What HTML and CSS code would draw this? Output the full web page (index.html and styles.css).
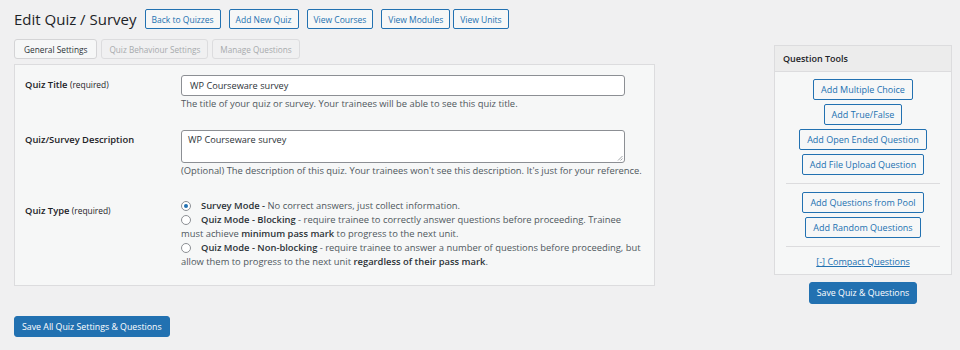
FILE: index.html
```html
<!DOCTYPE html>
<html>
<head>
<meta charset="utf-8">
<link rel="stylesheet" href="styles.css">
</head>
<body>
<div class="page">
  <div class="main">
    <div class="head">
      <h1 class="title">Edit Quiz / Survey</h1>
      <a class="btn" href="#">Back to Quizzes</a>
      <a class="btn" href="#">Add New Quiz</a>
      <a class="btn" href="#">View Courses</a>
      <a class="btn" href="#">View Modules</a>
      <a class="btn btn-tight" href="#">View Units</a>
    </div>
    <div class="tabs">
      <span class="tab tab-active">General Settings</span>
      <span class="tab">Quiz Behaviour Settings</span>
      <span class="tab">Manage Questions</span>
    </div>
    <div class="panel">
      <div class="row row-title">
        <div class="label"><b>Quiz Title</b> <span class="req">(required)</span></div>
        <div class="field">
          <div class="input">WP Courseware survey</div>
          <div class="desc">The title of your quiz or survey. Your trainees will be able to see this quiz title.</div>
        </div>
      </div>
      <div class="row row-desc">
        <div class="label"><b>Quiz/Survey Description</b></div>
        <div class="field">
          <div class="textarea">WP Courseware survey
            <svg class="grip" width="6" height="6" viewBox="0 0 6 6"><path d="M5.5 1 L1 5.5 M5.5 3.5 L3.5 5.5" stroke="#8c8f94" stroke-width="0.8" fill="none"/></svg>
          </div>
          <div class="desc">(Optional) The description of this quiz. Your trainees won't see this description. It's just for your reference.</div>
        </div>
      </div>
      <div class="row row-type">
        <div class="label label-type"><b>Quiz Type</b> <span class="req">(required)</span></div>
        <div class="field radios">
          <div class="opt"><span class="radio checked"></span><b>Survey Mode -</b> No correct answers, just collect information.</div>
          <div class="opt"><span class="radio"></span><b>Quiz Mode - Blocking</b> - require trainee to correctly answer questions before proceeding. Trainee must achieve <b>minimum pass mark</b> to progress to the next unit.</div>
          <div class="opt"><span class="radio"></span><b>Quiz Mode - Non-blocking</b> - require trainee to answer a number of questions before proceeding, but allow them to progress to the next unit <b>regardless of their pass mark</b>.</div>
        </div>
      </div>
    </div>
    <div class="save-row">
      <a class="btn-primary" href="#">Save All Quiz Settings &amp; Questions</a>
    </div>
  </div>
  <div class="side">
    <div class="box">
      <div class="box-head">Question Tools</div>
      <div class="box-body">
        <div class="tools">
          <a class="tbtn" href="#">Add Multiple Choice</a>
          <a class="tbtn" href="#">Add True/False</a>
          <a class="tbtn" href="#">Add Open Ended Question</a>
          <a class="tbtn" href="#">Add File Upload Question</a>
        </div>
        <div class="sep"></div>
        <div class="tools">
          <a class="tbtn" href="#">Add Questions from Pool</a>
          <a class="tbtn" href="#">Add Random Questions</a>
        </div>
        <div class="sep"></div>
        <div class="compact"><a href="#">[-] Compact Questions</a></div>
      </div>
    </div>
    <div class="side-save"><a class="btn-primary btn-side" href="#">Save Quiz &amp; Questions</a></div>
  </div>
</div>
</body>
</html>
```

FILE: styles.css
```css
* { box-sizing: border-box; }
html, body { margin: 0; padding: 0; }
body {
  background: #f0f0f1;
  font-family: "Open Sans", "Noto Sans", sans-serif;
  font-size: 9.4px;
  color: #3c434a;
}
a { text-decoration: none; }
.page {
  display: flex;
  align-items: flex-start;
  padding: 0 8px 0 14px;
}
.main { width: 641px; }
.side { width: 178px; margin-left: auto; margin-top: 45px; }

.head {
  display: flex;
  align-items: center;
  height: 38px;
}
.title {
  margin: 0 8px 0 0;
  font-size: 15px;
  font-weight: 400;
  color: #1d2327;
  line-height: 20px;
}
.btn {
  display: inline-flex;
  align-items: center;
  height: 20px;
  padding: 0 6px;
  margin-right: 8px;
  border: 1px solid #2271b1;
  border-radius: 2px;
  background: #f6f7f7;
  color: #2271b1;
  font-size: 8.5px;
}
.btn-tight { margin-left: -5px; }

.tabs {
  display: flex;
  gap: 4px;
  height: 26px;
  align-items: flex-start;
  padding-top: 1px;
}
.tab {
  display: inline-flex;
  align-items: center;
  height: 20px;
  padding: 0 7px;
  border: 1px solid #dcdcde;
  border-radius: 3px;
  background: #f0f0f1;
  color: #a7aaad;
  font-size: 8.2px;
}
.tab-active { background: #f6f7f7; color: #2c3338; border-color: #d4d4d6; padding: 0 9px; font-size: 8.3px; }

.panel {
  border: 1px solid #dcdcde;
  background: #f6f7f7;
  padding: 10px 10px 16px 10px;
}
.row { display: grid; grid-template-columns: 156px 1fr; }
.row-desc { margin-top: 19px; }
.row-type { margin-top: 21px; }
.label { color: #1d2327; line-height: 14px; padding-top: 3px; }
.label b { font-weight: 600; }
.req { font-size: 8.4px; }
.label-type { padding-top: 5px; }
.input, .textarea {
  width: 444px;
  background: #fff;
  border: 1px solid #8c8f94;
  border-radius: 3px;
  color: #2c3338;
  font-size: 9.2px;
}
.input { height: 21px; padding: 0 8px; line-height: 19px; }
.textarea { height: 33px; padding: 2px 6px; line-height: 14px; position: relative; }
.grip { position: absolute; right: 1px; bottom: 1px; }
.desc { color: #50575e; line-height: 14px; margin-top: 1px; }

.radios { line-height: 14px; color: #50575e; }
.radios b { color: #2c3338; font-weight: 600; }
.radio {
  display: inline-block;
  width: 10px; height: 10px;
  border: 1px solid #8c8f94;
  border-radius: 50%;
  background: #fff;
  vertical-align: -2px;
  margin-right: 10px;
  position: relative;
}
.radio.checked::after {
  content: "";
  position: absolute;
  left: 2px; top: 2px;
  width: 4px; height: 4px;
  border-radius: 50%;
  background: #2271b1;
}

.save-row { display: flex; margin-top: 30px; }
.btn-primary {
  display: inline-flex;
  align-items: center;
  height: 21px;
  padding: 0 7px;
  background: #2271b1;
  border: 1px solid #2271b1;
  border-radius: 3px;
  color: #fff;
  font-size: 8.8px;
}
.btn-side { height: 22px; }

.box {
  border: 1px solid #dcdcde;
  background: #f6f7f7;
}
.box-head {
  height: 26px;
  display: flex;
  align-items: center;
  padding-left: 8px;
  background: #ececec;
  border-bottom: 1px solid #dcdcde;
  font-weight: 600;
  font-size: 9px;
  color: #1d2327;
}
.box-body { padding: 7px 11px 0; }
.tools { display: flex; flex-direction: column; align-items: center; gap: 4px; }
.tbtn {
  display: inline-flex;
  align-items: center;
  height: 21px;
  padding: 0 7px;
  border: 1px solid #2271b1;
  border-radius: 2px;
  background: #f6f7f7;
  color: #2271b1;
  font-size: 9px;
}
.sep { height: 1px; background: #dcdcde; margin: 8px 0 8px; }
.compact { text-align: center; line-height: 14px; padding: 0 0 5px; font-size: 9px; }
.compact a { color: #2271b1; text-decoration: underline; }
.side-save { display: flex; justify-content: center; margin-top: 7px; }
```
